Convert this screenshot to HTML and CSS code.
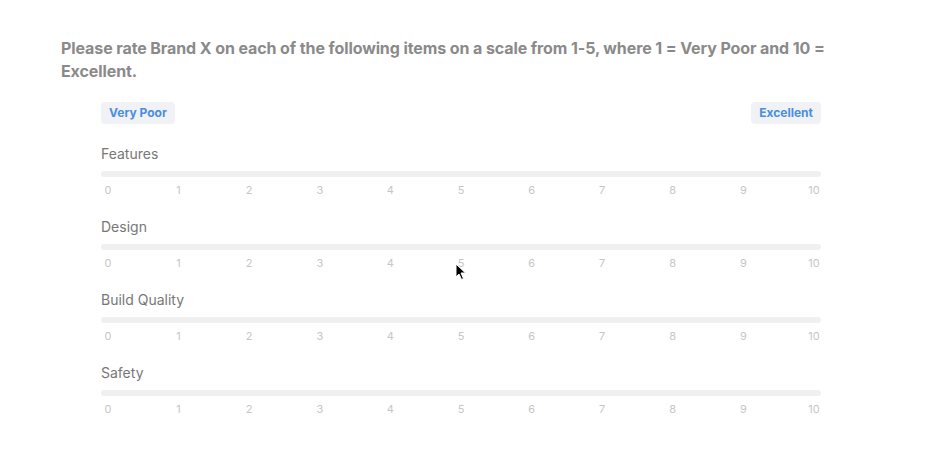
FILE: index.html
```html
<!DOCTYPE html>
<html lang="en">
<head>
    <meta charset="UTF-8">
    <meta name="viewport" content="width=device-width, initial-scale=1.0">
    <title>Rate Brand X</title>
    <link rel="stylesheet" href="styles.css">
</head>
<body>
    <div class="survey">
        <h1 class="question">Please rate Brand X on each of the following items on a scale from 1-5, where 1 = Very Poor and 10 = Excellent.</h1>

        <div class="matrix">
            <div class="legend">
                <span class="badge">Very Poor</span>
                <span class="badge">Excellent</span>
            </div>

            <div class="item">
                <div class="item-label">Features</div>
                <div class="track"></div>
                <div class="scale">
                    <span>0</span><span>1</span><span>2</span><span>3</span><span>4</span><span>5</span><span>6</span><span>7</span><span>8</span><span>9</span><span>10</span>
                </div>
            </div>

            <div class="item">
                <div class="item-label">Design</div>
                <div class="track"></div>
                <div class="scale">
                    <span>0</span><span>1</span><span>2</span><span>3</span><span>4</span><span>5</span><span>6</span><span>7</span><span>8</span><span>9</span><span>10</span>
                </div>
            </div>

            <div class="item">
                <div class="item-label">Build Quality</div>
                <div class="track"></div>
                <div class="scale">
                    <span>0</span><span>1</span><span>2</span><span>3</span><span>4</span><span>5</span><span>6</span><span>7</span><span>8</span><span>9</span><span>10</span>
                </div>
            </div>

            <div class="item">
                <div class="item-label">Safety</div>
                <div class="track"></div>
                <div class="scale">
                    <span>0</span><span>1</span><span>2</span><span>3</span><span>4</span><span>5</span><span>6</span><span>7</span><span>8</span><span>9</span><span>10</span>
                </div>
            </div>
        </div>
    </div>

    <!-- mouse pointer caught in the screenshot -->
    <svg class="cursor" width="12" height="18" viewBox="0 0 12 18">
        <path d="M1 1 L1 14 L4 11 L6.5 16.5 L8.5 15.5 L6 10 L10.5 10 Z" fill="#000" stroke="#fff" stroke-width="1"/>
    </svg>
</body>
</html>
```

FILE: styles.css
```css
body {
    margin: 0;
    background-color: #ffffff;
    font-family: Inter, "Noto Sans", sans-serif;
}

.survey {
    padding: 37px 61px 0 61px;
}

.question {
    margin: 0;
    max-width: 790px;
    font-size: 16px;
    line-height: 23px;
    font-weight: 700;
    letter-spacing: -0.1px;
    color: #8a8a8a;
}

.matrix {
    width: 720px;
    margin: 19px 0 0 40px;
}

.legend {
    display: flex;
    justify-content: space-between;
}

.badge {
    display: inline-block;
    height: 22px;
    line-height: 22px;
    padding: 0 8px;
    border-radius: 4px;
    background-color: #f0f2f5;
    color: #4a8ee0;
    font-size: 12px;
    font-weight: 700;
}

.item {
    margin-top: 20px;
}

.item-label {
    font-size: 14px;
    line-height: 20px;
    color: #777777;
}

.track {
    height: 6px;
    margin-top: 7px;
    border-radius: 3px;
    background-color: #f0f0f0;
}

.scale {
    display: flex;
    justify-content: space-between;
    margin-top: 6px;
}

.scale span {
    width: 14px;
    text-align: center;
    font-size: 11px;
    line-height: 14px;
    color: #c6c6c6;
}

.cursor {
    position: absolute;
    left: 455px;
    top: 263px;
}
```
